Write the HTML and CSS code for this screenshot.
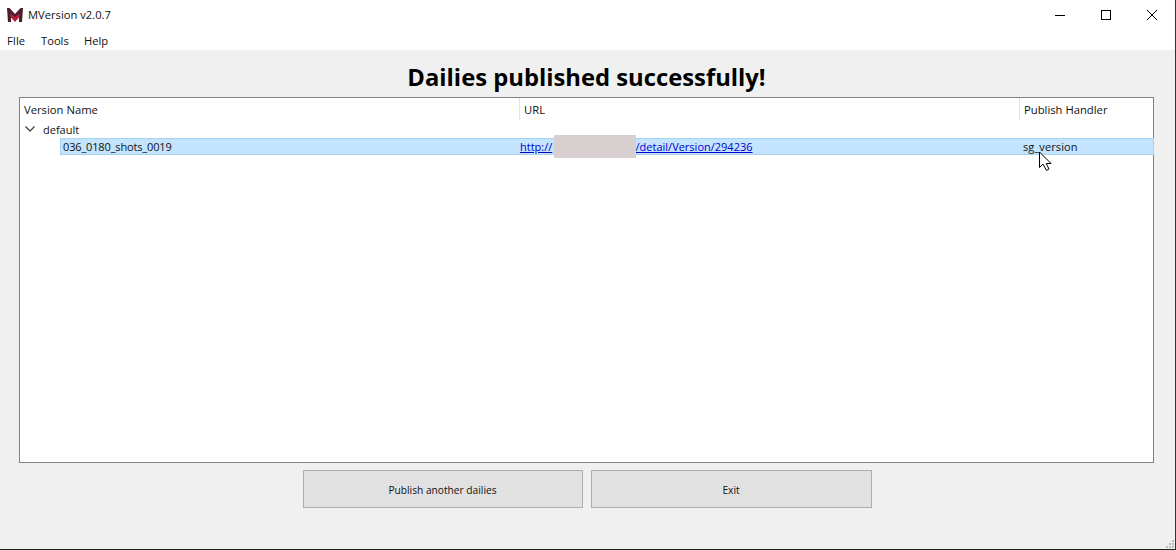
FILE: index.html
```html
<!DOCTYPE html>
<html lang="en">
<head>
<meta charset="utf-8">
<title>MVersion v2.0.7</title>
<link rel="stylesheet" href="styles.css">
</head>
<body>
<div class="window">
  <header class="titlebar">
    <svg class="logo" width="16" height="14" viewBox="0 0 16 14">
      <path d="M0 0 L2.5 0 L8 6 L13.5 0 L16 0 L15 14 L12 14 L12 6.5 L8 10 L4 6.5 L4 14 L1 14 Z" fill="#4a1f2b"/>
      <path d="M3.6 5 L8 9.5 L12.4 5 L12.4 9 L8 14 L3.6 9 Z" fill="#b51c38"/>
    </svg>
    <span class="title">MVersion v2.0.7</span>
    <div class="controls">
      <svg width="12" height="12" viewBox="0 0 12 12"><path d="M1 6.5H11" stroke="#000" fill="none"/></svg>
      <svg width="12" height="12" viewBox="0 0 12 12"><rect x="1.5" y="1.5" width="9" height="9" stroke="#000" fill="none"/></svg>
      <svg width="12" height="12" viewBox="0 0 12 12"><path d="M1 1L11 11M11 1L1 11" stroke="#000" fill="none"/></svg>
    </div>
  </header>
  <nav class="menubar">
    <span class="menu-item m-file">FIle</span>
    <span class="menu-item m-tools">Tools</span>
    <span class="menu-item">Help</span>
  </nav>
  <main class="content">
    <h1 class="heading">Dailies published successfully!</h1>
    <section class="tree">
      <div class="tree-head">
        <div class="col col-name">Version Name</div>
        <div class="col col-url">URL</div>
        <div class="col col-handler">Publish Handler</div>
      </div>
      <div class="group-row">
        <svg class="chevron" width="10" height="6" viewBox="0 0 10 6"><path d="M0.5 0.5L5 5L9.5 0.5" stroke="#444" fill="none" stroke-width="1.3"/></svg>
        <span>default</span>
      </div>
      <div class="item-row">
        <div class="cell cell-name">036_0180_shots_0019</div>
        <div class="cell cell-url"><a href="#">http://<span class="redacted"></span>/detail/Version/294236</a></div>
        <div class="cell cell-handler">sg_version</div>
      </div>
      <svg class="cursor" width="14" height="21" viewBox="0 0 14 21">
        <path d="M1.5 1 V16.5 L5 13 L8.5 19.5 L11 18 L8.2 12.5 L13 12.5 Z" fill="#fff" stroke="#000" stroke-width="1"/>
      </svg>
    </section>
    <div class="actions">
      <button class="btn btn-publish">Publish another dailies</button>
      <button class="btn btn-exit">Exit</button>
    </div>
    <div class="grip"><i></i><i></i><i></i><i></i><i></i><i></i></div>
  </main>
</div>
</body>
</html>
```
FILE: styles.css
```css
* { box-sizing: border-box; }
html, body { margin: 0; padding: 0; }
body { width: 1176px; height: 550px; overflow: hidden; background: #fff; }
.window {
  width: 1176px; height: 550px;
  display: flex; flex-direction: column;
  font-family: "Open Sans", "Liberation Sans", sans-serif;
  font-size: 11px; color: #111;
  border-right: 1px solid #333; border-bottom: 1px solid #222;
}
.titlebar { height: 29px; display: flex; align-items: center; padding-left: 7px; background: #fff; }
.logo { margin-right: 5px; }
.title { font-size: 11.2px; }
.controls { margin-left: auto; display: flex; gap: 34px; padding-right: 17px; }
.menubar { height: 21px; display: flex; padding: 2px 0 0 7px; background: #fff; align-items: center; font-size: 11.2px; }
.m-file { width: 34px; }
.m-tools { width: 43px; }
.content { flex: 1; background: #f0f0f0; position: relative; display: flex; flex-direction: column; padding: 0 21px 0 19px; }
.heading { margin: 0; height: 47px; display: flex; align-items: center; justify-content: center; font-family: "Open Sans", sans-serif; font-size: 23.8px; font-weight: 700; color: #000; padding-top: 6px; padding-left: 0; }
.tree { height: 366px; background: #fff; border: 1px solid #808080; position: relative; }
.tree-head { display: flex; height: 22px; font-size: 11.25px; }
.col { padding: 4px 0 0 4px; border-right: 1px solid #e4e4e4; }
.col-name { width: 500px; }
.col-url { width: 500px; }
.col-handler { flex: 1; border-right: 0; }
.group-row { height: 18px; display: flex; align-items: center; padding-left: 5px; }
.chevron { margin-right: 8px; }
.item-row { height: 17px; margin-left: 40px; margin-right: -1px; display: flex; align-items: center; background: #c4e3fc; border: 1px solid #a6d2f2; }
.cell { white-space: nowrap; }
.cell-name { width: 459px; padding-left: 2px; letter-spacing: -0.15px; }
.cell-url { width: 503px; }
.cell-url a { color: #0000d0; text-decoration: underline; }
.cell-handler { flex: 1; letter-spacing: 0.1px; }
.redacted { display: inline-block; position: relative; width: 82px; height: 0; margin-left: 1.3px; }
.redacted::after { content: ""; position: absolute; left: 0; top: -16px; width: 82px; height: 23px; background: #d8d0d0; }
.cursor { position: absolute; left: 1018px; top: 53px; }
.actions { display: flex; justify-content: center; gap: 8px; margin-top: 7px; padding-left: 1px; }
.btn { height: 38px; background: #e1e1e1; border: 1px solid #adadad; font-family: inherit; font-size: 10.2px; color: #111; padding: 1px 0 0; }
.btn-publish { width: 280px; }
.btn-exit { width: 281px; }
.grip { position: absolute; right: 1px; bottom: 1px; width: 8px; height: 8px; display: grid; grid-template-columns: repeat(3, 2px); grid-auto-rows: 2px; gap: 1px; }
.grip i { background: #bcbcbc; }
.grip i:nth-child(1) { grid-column: 3; grid-row: 1; }
.grip i:nth-child(2) { grid-column: 2; grid-row: 2; }
.grip i:nth-child(3) { grid-column: 3; grid-row: 2; }
.grip i:nth-child(4) { grid-column: 1; grid-row: 3; }
.grip i:nth-child(5) { grid-column: 2; grid-row: 3; }
.grip i:nth-child(6) { grid-column: 3; grid-row: 3; }
```
